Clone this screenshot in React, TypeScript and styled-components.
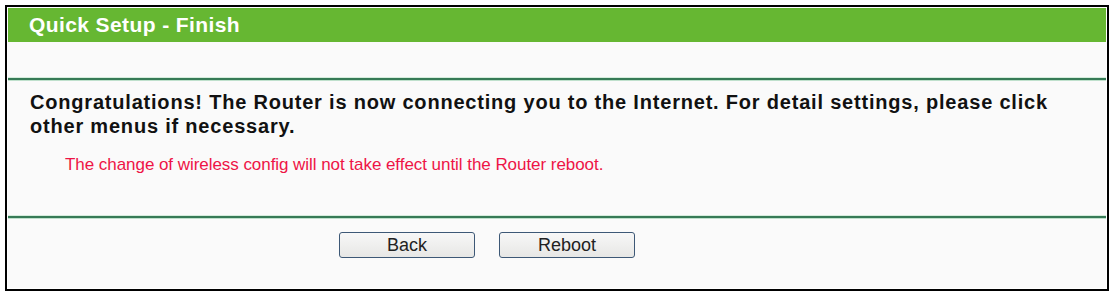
import React from "react";
import styled, { createGlobalStyle } from "styled-components";

const Global = createGlobalStyle`
  html, body { margin: 0; padding: 0; background: #ffffff; }
  body { font-family: "Liberation Sans", Arial, sans-serif; }
`;

const Frame = styled.div`
  box-sizing: border-box;
  margin: 5px 0 0 5px;
  width: 1104px;
  height: 286px;
  border: 2px solid #000;
  padding: 1px;
  background: #ffffff;
  display: flex;
  flex-direction: column;
`;

const Panel = styled.div`
  flex: 1;
  background: #fafafa;
  display: flex;
  flex-direction: column;
`;

const Header = styled.div`
  height: 34px;
  background: #66b732;
  color: #ffffff;
  font-weight: bold;
  font-size: 21px;
  letter-spacing: 0.4px;
  line-height: 34px;
  padding-left: 21px;
`;

const Spacer = styled.div<{ $h: number }>`
  height: ${(p) => p.$h}px;
`;

const Rule = styled.div`
  height: 2px;
  background: #367a56;
  box-shadow: 0 1px 0 #bfe0cc, 0 -1px 0 #d5ecdc;
`;

const Content = styled.div`
  padding: 10px 20px 0 22px;
  height: 136px;
  box-sizing: border-box;
`;

const Message = styled.p`
  margin: 0;
  font-weight: bold;
  font-size: 20px;
  letter-spacing: 0.8px;
  line-height: 24px;
  color: #111;
`;

const Notice = styled.p`
  margin: 17px 0 0 35px;
  font-size: 17px;
  letter-spacing: -0.05px;
  line-height: 20px;
  color: #ee1446;
`;

const ButtonRow = styled.div`
  display: flex;
  gap: 24px;
  padding: 14px 0 0 331px;
`;

const Button = styled.button`
  box-sizing: border-box;
  width: 136px;
  height: 26px;
  border: 1px solid #3d5876;
  border-radius: 3px;
  background: linear-gradient(#f7f7f7, #e7e7e5);
  font-family: "Liberation Sans", Arial, sans-serif;
  font-size: 18px;
  line-height: 24px;
  color: #222;
  padding: 0;
  cursor: pointer;
`;

export default function App() {
  return (
    <>
      <Global />
      <Frame>
        <Panel>
          <Header>Quick Setup - Finish</Header>
          <Spacer $h={36} />
          <Rule />
          <Content>
            <Message>
              Congratulations! The Router is now connecting you to the Internet. For detail settings, please click other menus if necessary.
            </Message>
            <Notice>The change of wireless config will not take effect until the Router reboot.</Notice>
          </Content>
          <Rule />
          <ButtonRow>
            <Button>Back</Button>
            <Button>Reboot</Button>
          </ButtonRow>
        </Panel>
      </Frame>
    </>
  );
}
